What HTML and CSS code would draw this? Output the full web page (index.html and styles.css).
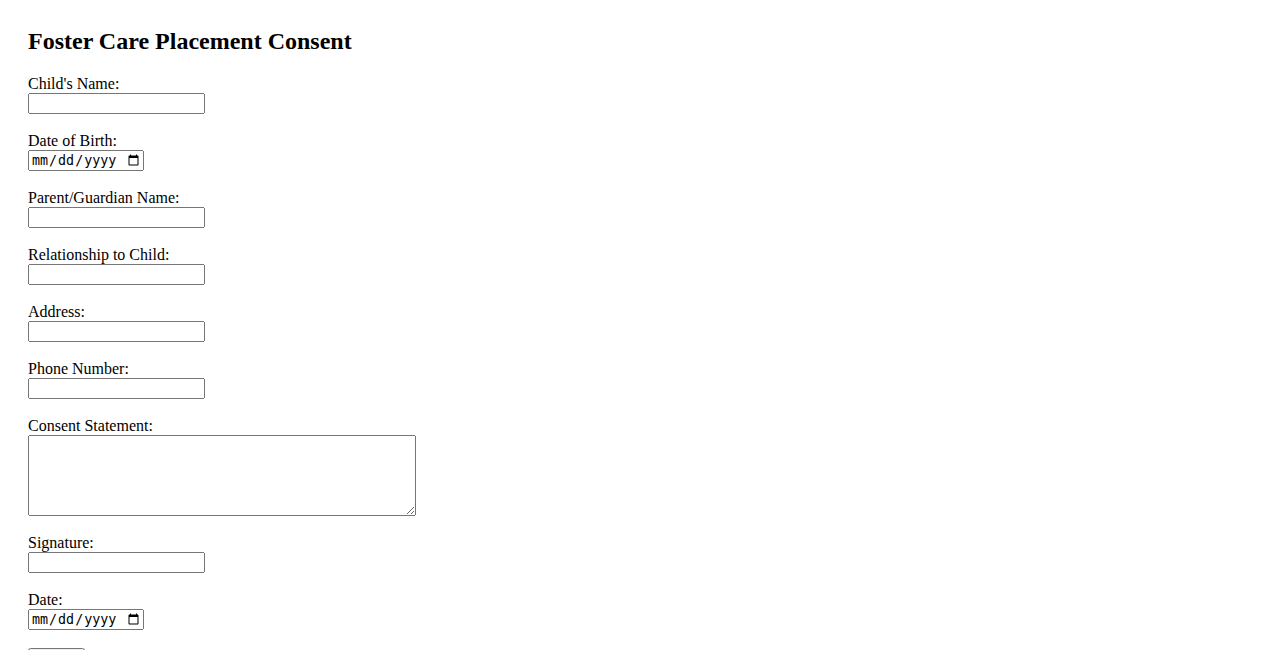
FILE: index.html
```html
<!DOCTYPE html>
<html>
<head>
<meta charset="utf-8">
<title>Foster Care Placement Consent</title>
<link rel="stylesheet" href="styles.css">
</head>
<body>
<h2 class="title">Foster Care Placement Consent</h2>
<form class="form">
  <div class="group">
    <label class="label" for="child">Child's Name:</label>
    <input class="text" type="text" id="child">
  </div>
  <div class="group">
    <label class="label" for="dob">Date of Birth:</label>
    <input class="date" type="date" id="dob">
  </div>
  <div class="group">
    <label class="label" for="parent">Parent/Guardian Name:</label>
    <input class="text" type="text" id="parent">
  </div>
  <div class="group">
    <label class="label" for="rel">Relationship to Child:</label>
    <input class="text" type="text" id="rel">
  </div>
  <div class="group">
    <label class="label" for="addr">Address:</label>
    <input class="text" type="text" id="addr">
  </div>
  <div class="group">
    <label class="label" for="phone">Phone Number:</label>
    <input class="text" type="text" id="phone">
  </div>
  <div class="group">
    <label class="label" for="consent">Consent Statement:</label>
    <textarea class="area" id="consent"></textarea>
  </div>
  <div class="group">
    <label class="label" for="sig">Signature:</label>
    <input class="text" type="text" id="sig">
  </div>
  <div class="group">
    <label class="label" for="date">Date:</label>
    <input class="date" type="date" id="date">
  </div>
  <button class="submit" type="submit">Submit</button>
</form>
</body>
</html>
```
FILE: styles.css
```css
html, body {
  background: #fff;
}
body {
  margin: 0;
  padding: 28px;
  font-family: "Liberation Serif", "Times New Roman", serif;
  font-size: 16px;
  color: #000;
}
.title {
  margin: 0 0 20px 0;
  font-size: 24px;
  font-weight: bold;
  line-height: 27px;
}
.form {
  margin: 0;
}
.group {
  margin-bottom: 18px;
}
.label {
  display: block;
  line-height: 18px;
  height: 18px;
}
.text,
.date,
.area {
  display: block;
  box-sizing: border-box;
  margin: 0;
}
.text {
  width: 177px;
  height: 21px;
}
.date {
  width: 116px;
  height: 21px;
}
.area {
  width: 388px;
  height: 81px;
}
.submit {
  display: block;
  margin: 0;
}
```
